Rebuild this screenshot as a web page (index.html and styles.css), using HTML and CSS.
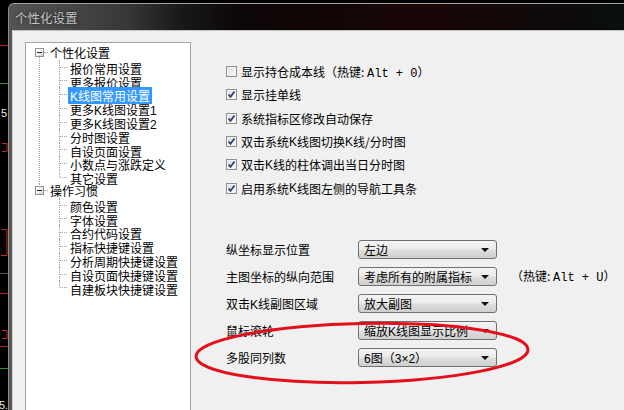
FILE: index.html
```html
<!DOCTYPE html>
<html lang="zh-CN">
<head>
    <meta charset="UTF-8">
    <title>个性化设置</title>
    <link rel="stylesheet" href="styles.css">
</head>
<body>
    <div class="desk">
        <div class="chart-edge">
            <svg width="8" height="407" viewBox="0 0 8 407">
                <line x1="0" y1="42.5" x2="8" y2="42.5" stroke="#b3191e"/>
                <line x1="0" y1="80.5" x2="8" y2="80.5" stroke="#1f9a2a"/>
                <text x="1" y="114" fill="#e8e8e8" font-size="11" font-family="Liberation Sans">5</text>
                <path d="M2 140.5h5v8h-5" fill="none" stroke="#c0282c"/>
                <path d="M1 226.5h6v26h-6" fill="none" stroke="#c0282c"/>
                <line x1="0" y1="270.5" x2="8" y2="270.5" stroke="#555"/>
                <line x1="0" y1="290.5" x2="8" y2="290.5" stroke="#b3191e"/>
                <path d="M2 327.5h5v8h-5" fill="none" stroke="#c0282c"/>
                <line x1="0" y1="343.5" x2="8" y2="343.5" stroke="#b3191e"/>
                <line x1="0" y1="365.5" x2="8" y2="365.5" stroke="#1f9a2a"/>
                <text x="-1" y="406" fill="#e8e8e8" font-size="11" font-family="Liberation Sans">5.</text>
            </svg>
        </div>

        <div class="window">
            <div class="titlebar"><span class="title">个性化设置</span></div>

            <div class="client">
                <div class="tree">
                    <ul class="tree-root">
                        <li class="group">
                            <div class="node"><span class="toggle"></span><span class="label">个性化设置</span></div>
                            <ul class="children">
                                <li><span class="label">报价常用设置</span></li>
                                <li><span class="label">更多报价设置</span></li>
                                <li><span class="label selected"><span class="latin">K</span>线图常用设置</span></li>
                                <li><span class="label">更多<span class="latin">K</span>线图设置<span class="latin">1</span></span></li>
                                <li><span class="label">更多<span class="latin">K</span>线图设置<span class="latin">2</span></span></li>
                                <li><span class="label">分时图设置</span></li>
                                <li><span class="label">自设页面设置</span></li>
                                <li><span class="label">小数点与涨跌定义</span></li>
                                <li><span class="label">其它设置</span></li>
                            </ul>
                        </li>
                        <li class="group">
                            <div class="node"><span class="toggle"></span><span class="label">操作习惯</span></div>
                            <ul class="children">
                                <li><span class="label">颜色设置</span></li>
                                <li><span class="label">字体设置</span></li>
                                <li><span class="label">合约代码设置</span></li>
                                <li><span class="label">指标快捷键设置</span></li>
                                <li><span class="label">分析周期快捷键设置</span></li>
                                <li><span class="label">自设页面快捷键设置</span></li>
                                <li><span class="label">自建板块快捷键设置</span></li>
                            </ul>
                        </li>
                    </ul>
                </div>

                <div class="settings">
                    <div class="checks">
                        <div class="check"><span class="box"></span>显示持仓成本线<span class="hotkey">（热键: <span class="mono">Alt + 0</span>）</span></div>
                        <div class="check"><span class="box on"><svg width="9" height="9" viewBox="0 0 9 9"><path d="M1.5 4.5l2 2.3 4-5.3" fill="none" stroke="#2b3f6e" stroke-width="1.8"/></svg></span>显示挂单线</div>
                        <div class="check"><span class="box on"><svg width="9" height="9" viewBox="0 0 9 9"><path d="M1.5 4.5l2 2.3 4-5.3" fill="none" stroke="#2b3f6e" stroke-width="1.8"/></svg></span>系统指标区修改自动保存</div>
                        <div class="check"><span class="box on"><svg width="9" height="9" viewBox="0 0 9 9"><path d="M1.5 4.5l2 2.3 4-5.3" fill="none" stroke="#2b3f6e" stroke-width="1.8"/></svg></span>双击系统<span class="latin">K</span>线图切换<span class="latin">K</span>线/分时图</div>
                        <div class="check"><span class="box on"><svg width="9" height="9" viewBox="0 0 9 9"><path d="M1.5 4.5l2 2.3 4-5.3" fill="none" stroke="#2b3f6e" stroke-width="1.8"/></svg></span>双击<span class="latin">K</span>线的柱体调出当日分时图</div>
                        <div class="check"><span class="box on"><svg width="9" height="9" viewBox="0 0 9 9"><path d="M1.5 4.5l2 2.3 4-5.3" fill="none" stroke="#2b3f6e" stroke-width="1.8"/></svg></span>启用系统<span class="latin">K</span>线图左侧的导航工具条</div>
                    </div>

                    <div class="form">
                        <div class="field">
                            <span class="field-label">纵坐标显示位置</span>
                            <span class="combo">左边</span>
                        </div>
                        <div class="field">
                            <span class="field-label">主图坐标的纵向范围</span>
                            <span class="combo">考虑所有的附属指标</span>
                            <span class="hotkey side">（热键: <span class="mono">Alt + U</span>）</span>
                        </div>
                        <div class="field">
                            <span class="field-label">双击<span class="latin">K</span>线副图区域</span>
                            <span class="combo">放大副图</span>
                        </div>
                        <div class="field">
                            <span class="field-label">鼠标滚轮</span>
                            <span class="combo">缩放<span class="latin">K</span>线图显示比例</span>
                        </div>
                        <div class="field">
                            <span class="field-label">多股同列数</span>
                            <span class="combo"><span class="latin">6</span>图（<span class="latin">3×2</span>）</span>
                        </div>
                    </div>
                </div>
            </div>
        </div>

        <svg class="mark" width="624" height="410" viewBox="0 0 624 410">
            <ellipse cx="362" cy="353" rx="166" ry="29.5" transform="rotate(-1.2 362 353)" fill="none" stroke="#e3101c" stroke-width="3"/>
        </svg>
    </div>
</body>
</html>
```

FILE: styles.css
```css
:root {
    --tree-line: #a0a0a0;
    --row-h: 13.8px;
    --check-h: 23.3px;
}

* {
    box-sizing: border-box;
}

html, body {
    margin: 0;
    padding: 0;
}

body {
    width: 624px;
    height: 410px;
    overflow: hidden;
    background: #000;
    font-family: "Noto Sans CJK SC", "Liberation Sans", sans-serif;
    font-size: 12px;
    color: #000;
}

ul {
    list-style: none;
    margin: 0;
    padding: 0;
}

.latin {
    font-family: "Liberation Sans", sans-serif;
}

.mono {
    font-family: "Liberation Mono", monospace;
}

.desk {
    position: relative;
    display: flex;
    height: 410px;
}

.chart-edge {
    width: 8px;
    padding-top: 3px;
}

.chart-edge svg {
    display: block;
}

/* window frame */
.window {
    flex: 1;
    margin-top: 3px;
    display: flex;
    flex-direction: column;
    border-top: 1px solid #a4a4a4;
    border-left: 1px solid #8c8c8c;
    border-top-left-radius: 6px;
    background: linear-gradient(90deg, #555 0, #474747 60px, #363636 120px, #1a1a1a 170px, #0c0606 230px, #1a0607 420px, #0d0a0a 560px, #0a1010 100%);
}

.titlebar {
    height: 26px;
    padding-left: 6px;
    display: flex;
    align-items: center;
}

.title {
    color: #c4c4c4;
    font-size: 12.5px;
    text-shadow: 0 0 4px rgba(0,0,0,0.7);
}

.client {
    flex: 1;
    margin-left: 3px;
    display: flex;
    border-top: 1px solid #c2c2c2;
    border-left: 1px solid #d6d6d6;
    background: #f0f0f0;
}

/* tree */
.tree {
    width: 166px;
    margin: 11px 0 0 12px;
    padding-top: 3px;
    background: #fff;
    border: 1px solid #a3a3a3;
    border-bottom: none;
}

.tree-root {
    padding-left: 9px;
}

.group {
    position: relative;
}

.group::before {
    content: "";
    position: absolute;
    left: 4px;
    top: 7px;
    bottom: 0;
    border-left: 1px dotted var(--tree-line);
}

.group:last-child::before {
    top: 0;
    bottom: auto;
    height: 7px;
}

.node {
    display: flex;
    align-items: center;
    height: var(--row-h);
}

.toggle {
    position: relative;
    z-index: 1;
    width: 9px;
    height: 9px;
    margin-right: 4px;
    border: 1px solid #919191;
    background: linear-gradient(135deg, #fff 0, #f2f2f2 45%, #cfcfcf 100%);
}

.toggle::before {
    content: "";
    position: absolute;
    left: 1px;
    top: 3px;
    width: 5px;
    height: 1px;
    background: #2a2a2a;
}

.toggle::after {
    content: "";
    position: absolute;
    left: 8px;
    top: 3px;
    width: 4px;
    border-top: 1px dotted var(--tree-line);
}

.label {
    padding: 0 2px;
    line-height: var(--row-h);
    white-space: nowrap;
}

.label.selected {
    background: #3399ff;
    color: #fff;
}

.children {
    margin-left: 24px;
}

.children li {
    position: relative;
    height: var(--row-h);
    padding-left: 9px;
}

.children li::before {
    content: "";
    position: absolute;
    left: 0;
    top: 0;
    bottom: 0;
    border-left: 1px dotted var(--tree-line);
}

.children li:last-child::before {
    bottom: 50%;
}

.children li::after {
    content: "";
    position: absolute;
    left: 1px;
    top: 50%;
    width: 7px;
    border-top: 1px dotted var(--tree-line);
}

/* right panel */
.settings {
    flex: 1;
    padding: 29px 0 0 35px;
    white-space: nowrap;
}

.check {
    display: flex;
    align-items: center;
    height: var(--check-h);
}

.box {
    width: 11px;
    height: 11px;
    margin-right: 4px;
    display: flex;
    align-items: center;
    justify-content: center;
    border: 1px solid #8e8f8f;
    background: linear-gradient(135deg, #d9d9d9 0, #ececec 50%, #fbfbfb 100%);
    box-shadow: inset 0 0 0 1px #f4f4f4;
}

.box svg {
    display: block;
}

.hotkey {
    font-size: 12px;
}

.form {
    margin-top: 36px;
}

.field {
    display: flex;
    align-items: center;
    height: 27px;
}

.field-label {
    width: 132px;
}

.combo {
    position: relative;
    width: 139px;
    height: 19px;
    padding-left: 5px;
    line-height: 17px;
    border: 1px solid #707070;
    border-radius: 3px;
    background: linear-gradient(#f3f3f3 0, #ebebeb 48%, #dedede 52%, #cfcfcf 100%);
}

.combo::after {
    content: "";
    position: absolute;
    right: 7px;
    top: 7px;
    border-left: 4px solid transparent;
    border-right: 4px solid transparent;
    border-top: 4px solid #111;
}

.hotkey.side {
    margin-left: 14px;
}

.mark {
    position: absolute;
    left: 0;
    top: 0;
    pointer-events: none;
}
```
